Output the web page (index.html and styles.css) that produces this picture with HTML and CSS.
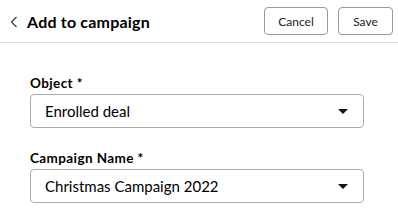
FILE: index.html
```html
<html>
<head>
    <title>Add to campaign</title>
    <link rel="stylesheet" href="styles.css">
</head>
<body>
    <div class="panel">
        <div class="header">
            <div class="back">
                <svg width="8" height="12" viewBox="0 0 8 12"><path d="M6.5 1 L1.5 6 L6.5 11" fill="none" stroke="#33475b" stroke-width="1.3"/></svg>
            </div>
            <div class="title">Add to campaign</div>
            <div class="actions">
                <div class="btn btn-cancel">Cancel</div>
                <div class="btn btn-save">Save</div>
            </div>
        </div>
        <div class="form">
            <div class="field">
                <div class="label">Object *</div>
                <div class="select">
                    <span>Enrolled deal</span>
                    <span class="caret"></span>
                </div>
            </div>
            <div class="field">
                <div class="label">Campaign Name *</div>
                <div class="select">
                    <span>Christmas Campaign 2022</span>
                    <span class="caret"></span>
                </div>
            </div>
        </div>
    </div>
</body>
</html>
```
FILE: styles.css
```css
body {
    margin: 0;
    font-family: Lato, "Noto Sans", sans-serif;
    color: #000;
    background: #fff;
}
.header {
    display: flex;
    align-items: center;
    height: 42px;
    padding: 0 5px 0 10px;
    border-bottom: 1px solid #dcdcdc;
}
.back {
    width: 8px;
    height: 12px;
    display: flex;
    margin-right: 9px;
    margin-top: 1px;
}
.title {
    font-size: 16px;
    font-weight: bold;
    letter-spacing: 0.2px;
    flex: 1;
}
.actions {
    display: flex;
    gap: 10px;
}
.btn {
    height: 26px;
    border: 1px solid #999;
    border-radius: 4px;
    font-size: 12px;
    display: flex;
    align-items: center;
    justify-content: center;
    color: #222;
}
.btn-cancel {
    width: 62px;
}
.btn-save {
    width: 53px;
}
.form {
    padding: 32px 34px 0 30px;
}
.field {
    margin-bottom: 22px;
}
.label {
    font-size: 13.5px;
    font-weight: bold;
    letter-spacing: 0.4px;
    line-height: 16px;
    margin-bottom: 3px;
}
.select {
    height: 32px;
    border: 1px solid #aaa;
    border-radius: 4px;
    display: flex;
    align-items: center;
    justify-content: space-between;
    padding: 0 15px 0 14px;
    font-size: 15px;
}
.caret {
    width: 0;
    height: 0;
    border-left: 5px solid transparent;
    border-right: 5px solid transparent;
    border-top: 5px solid #111;
}
```
